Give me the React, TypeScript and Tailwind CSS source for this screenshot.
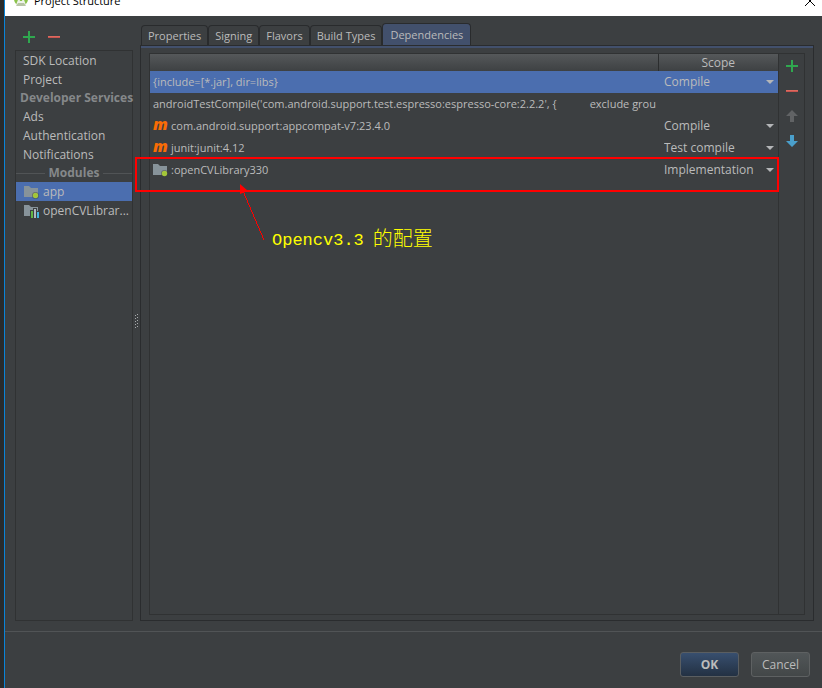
import { useState } from "react";
import type { ReactNode } from "react";

function PlusIcon() {
  return (
    <svg width="12" height="12" viewBox="0 0 12 12" shapeRendering="crispEdges" aria-hidden="true">
      <path d="M5 0h2v5h5v2H7v5H5V7H0V5h5z" fill="#2fa84f" />
    </svg>
  );
}

function MinusIcon() {
  return (
    <svg width="12" height="12" viewBox="0 0 12 12" shapeRendering="crispEdges" aria-hidden="true">
      <path d="M0 5h12v2H0z" fill="#c75450" />
      <path d="M0 5h12v1H0z" fill="#dd6a5e" />
    </svg>
  );
}

function ArrowIcon({ down = false }: { down?: boolean }) {
  return (
    <svg width="12" height="12" viewBox="0 0 12 12" aria-hidden="true">
      {down ? (
        <path d="M4 0h4v6h4l-6 6-6-6h4z" fill="#4a9fcb" />
      ) : (
        <path d="M6 0l6 6H8v6H4V6H0z" fill="#616365" />
      )}
    </svg>
  );
}

function FolderIcon({ kind }: { kind: "app" | "library" }) {
  return (
    <svg width="15" height="14" viewBox="0 0 15 14" className="shrink-0" aria-hidden="true">
      <path d="M0 1h5l2 2h7v9H0z" fill="#87939a" />
      {kind === "app" ? (
        <>
          <circle cx="11.500" cy="10.500" r="3.500" fill="#3c3f41" fillOpacity="0.500" />
          <circle cx="11.500" cy="10.500" r="2.700" fill="#a4c639" />
        </>
      ) : (
        <g shapeRendering="crispEdges">
          <path d="M6 6h3V4h4v3h2v7H6z" fill="#3c3f41" />
          <path d="M7 7h2v7H7z" fill="#62b543" />
          <path d="M10 5h2v9h-2z" fill="#aeb9c0" />
          <path d="M13 8h2v6h-2z" fill="#40b6e0" />
        </g>
      )}
    </svg>
  );
}

function MavenIcon() {
  return (
    <span className="w-[15px] shrink-0 pb-1 text-[16px] leading-4 font-extrabold text-[#f96c05] italic" aria-hidden="true">
      m
    </span>
  );
}

function SidebarItem({ label, icon, selected = false }: { label: string; icon?: ReactNode; selected?: boolean }) {
  return (
    <li>
      <button
        type="button"
        className={`flex h-[19px] w-full items-center gap-1 text-left whitespace-nowrap ${icon ? "pl-2" : "pl-[7px]"} ${selected ? "bg-[#4b6eaf]" : ""}`}
      >
        {icon}
        <span>{label}</span>
      </button>
    </li>
  );
}

function SidebarHeading({ label }: { label: string }) {
  return (
    <li className="flex h-[18px] items-center gap-1 font-bold whitespace-nowrap text-[#85888a]">
      <span className="h-px flex-1 bg-[#515456]" />
      {label}
      <span className="h-px flex-1 bg-[#515456]" />
    </li>
  );
}

type Dependency = { name: string; extra?: string; icon?: "maven" | "module"; scope?: string };

const dependencies: Dependency[] = [
  { name: "{include=[*.jar], dir=libs}", scope: "Compile" },
  { name: "androidTestCompile('com.android.support.test.espresso:espresso-core:2.2.2', {", extra: "exclude grou" },
  { name: "com.android.support:appcompat-v7:23.4.0", icon: "maven", scope: "Compile" },
  { name: "junit:junit:4.12", icon: "maven", scope: "Test compile" },
  { name: ":openCVLibrary330", icon: "module", scope: "Implementation" },
];

const scopes = ["Compile", "Test compile", "Implementation"];
const tabs = ["Properties", "Signing", "Flavors", "Build Types", "Dependencies"];

function ScopeSelect({ name, value }: { name: string; value: string }) {
  return (
    <div className="relative flex items-center">
      <select
        aria-label={`Scope of ${name}`}
        defaultValue={value}
        className="h-[22px] w-full appearance-none bg-transparent pl-[6px] outline-none"
      >
        {scopes.map((s) => (
          <option key={s}>{s}</option>
        ))}
      </select>
      <svg width="8" height="4" viewBox="0 0 8 4" className="pointer-events-none absolute right-1" aria-hidden="true">
        <path d="M0 0h8L4 4z" fill="#b4b6b8" />
      </svg>
    </div>
  );
}

function DependencyTable() {
  return (
    <table className="w-full table-fixed border-collapse">
      <thead>
        <tr className="h-[17px] bg-linear-to-b from-[#55585a] to-[#3e4143]">
          <th aria-label="Dependency" className="border-r border-[#2b2d2e] p-0" />
          <th className="w-[120px] p-0 text-center leading-4 font-normal">Scope</th>
        </tr>
      </thead>
      <tbody>
        {dependencies.map((d, i) => (
          <tr key={d.name} className={`h-[22px] ${i === 0 ? "bg-[#4b6eaf]" : ""}`}>
            <td className="p-0 text-[11px]">
              <div className="flex items-center gap-[3px] pl-[3px] whitespace-nowrap">
                {d.icon === "maven" && <MavenIcon />}
                {d.icon === "module" && <FolderIcon kind="app" />}
                <span>{d.name}</span>
                {d.extra && <span className="pl-[30px]">{d.extra}</span>}
              </div>
            </td>
            <td className="p-0">{d.scope && <ScopeSelect name={d.name} value={d.scope} />}</td>
          </tr>
        ))}
      </tbody>
    </table>
  );
}

export default function App() {
  const [active, setActive] = useState("Dependencies");
  return (
    <div className="flex min-h-screen bg-[#292b2c] pl-1 font-['Open_Sans','Noto_Sans',sans-serif] text-[12px] leading-4 text-[#bbbbbb]">
      <div className="flex min-w-0 flex-1 flex-col border-l border-[#0a84d8] bg-[#3c3f41]">
        <header className="flex h-4 items-start justify-between overflow-hidden bg-white pr-[11px] pl-2 text-black">
          <div className="-mt-[7px] flex items-center gap-1">
            <svg width="16" height="16" viewBox="0 0 16 16" aria-hidden="true">
              <circle cx="8" cy="6" r="7" fill="#8bc34a" />
              <path d="M4 12L8 2l4 10M5 9h6" fill="none" stroke="#eef3ea" strokeWidth="2" />
              <path d="M3 13l2-3h6l2 3z" fill="#b7c4a5" />
            </svg>
            <h1 className="pl-px text-[11px]">Project Structure</h1>
          </div>
          <button type="button" aria-label="Close" className="-mt-1">
            <svg width="10" height="10" viewBox="0 0 10 10" className="-mr-1" aria-hidden="true">
              <path d="M0 0l10 10M10 0L0 10" stroke="#000" />
            </svg>
          </button>
        </header>

        <main className="flex flex-1 pt-2 pr-2 pb-[10px] pl-[10px]">
          <aside className="flex w-[118px] shrink-0 flex-col">
            <div className="flex h-[26px] items-center gap-[13px] pl-2">
              <button type="button" aria-label="Add module"><PlusIcon /></button>
              <button type="button" aria-label="Remove module"><MinusIcon /></button>
            </div>
            <nav className="flex-1 border border-[#303233]" aria-label="Sections">
              <ul>
                <SidebarItem label="SDK Location" />
                <SidebarItem label="Project" />
                <SidebarHeading label="Developer Services" />
                <SidebarItem label="Ads" />
                <SidebarItem label="Authentication" />
                <SidebarItem label="Notifications" />
                <SidebarHeading label="Modules" />
                <SidebarItem label="app" icon={<FolderIcon kind="app" />} selected />
                <SidebarItem label="openCVLibrar..." icon={<FolderIcon kind="library" />} />
              </ul>
            </nav>
          </aside>

          <div className="flex w-[7px] shrink-0 items-center justify-center pb-1">
            <svg width="4" height="14" viewBox="0 0 4 14" shapeRendering="crispEdges" aria-hidden="true">
              <path d="M2 0h1v1H2zM0 1h1v1H0zM2 3h1v1H2zM0 4h1v1H0zM2 6h1v1H2zM0 7h1v1H0zM2 9h1v1H2zM0 10h1v1H0zM2 12h1v1H2zM0 13h1v1H0z" fill="#a8aaac" />
            </svg>
          </div>

          <section className="flex min-w-0 flex-1 flex-col">
            <div role="tablist" className="flex h-[21px] items-end pl-px">
              {tabs.map((tab) => (
                <button
                  key={tab}
                  type="button"
                  role="tab"
                  aria-selected={tab === active}
                  onClick={() => setActive(tab)}
                  className={`rounded-t border border-b-0 border-[#292b2d] text-[11px] whitespace-nowrap ${
                    tab === active ? "h-[22px] bg-[#42506c] px-[7px]" : "h-5 px-[6px]"
                  }`}
                >
                  {tab}
                </button>
              ))}
            </div>
            <div className="flex flex-1 flex-col border border-[#2a2c2e]">
              <div className="h-[2px] bg-[#42506c]" />
              <div className="flex flex-1 px-2 pt-[5px] pb-[5px]">
                <div className="relative min-w-0 flex-1 border border-[#303233]">
                  <DependencyTable />
                  <div className="pointer-events-none absolute top-[103px] -right-px -left-[15px] h-[35px] border-2 border-[#ff0000]" />
                  <svg width="28" height="60" viewBox="0 0 28 60" className="pointer-events-none absolute top-[130px] left-[88px]" aria-hidden="true">
                    <path d="M2 0L10 7 2 10z" fill="#f00" />
                    <path d="M5 7L26 56" stroke="#f00" fill="none" shapeRendering="crispEdges" />
                  </svg>
                  <p className="pointer-events-none absolute top-[175px] left-[122px] flex items-center gap-[9px] font-['Liberation_Mono','Noto_Sans_CJK_SC',monospace] text-[17px] leading-6 whitespace-nowrap text-[#ffff00]">
                    <span>Opencv3.3</span>
                    <span className="text-[20px] font-light">的配置</span>
                  </p>
                </div>
                <div className="flex w-[26px] flex-col items-center gap-[13px] border border-l-0 border-[#303233] pt-[6px]">
                  <button type="button" aria-label="Add dependency"><PlusIcon /></button>
                  <button type="button" aria-label="Remove dependency"><MinusIcon /></button>
                  <button type="button" aria-label="Move up"><ArrowIcon /></button>
                  <button type="button" aria-label="Move down"><ArrowIcon down /></button>
                </div>
              </div>
            </div>
          </section>
        </main>

        <footer className="flex justify-end gap-3 border-t border-[#515456] pt-5 pr-3 pb-[11px]">
          <button type="button" className="h-[25px] w-[59px] rounded-[3px] border border-[#5a5e61] bg-linear-to-b from-[#384f6f] to-[#233143] font-bold">
            OK
          </button>
          <button type="button" className="h-[25px] w-[59px] rounded-[3px] border border-[#5e6162] bg-linear-to-b from-[#515658] to-[#434748]">
            Cancel
          </button>
        </footer>
      </div>
    </div>
  );
}
